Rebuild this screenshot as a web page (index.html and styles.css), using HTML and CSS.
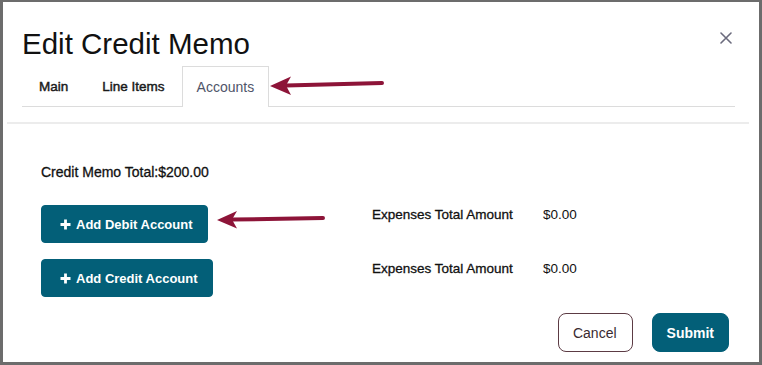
FILE: index.html
```html
<!DOCTYPE html>
<html lang="en">
<head>
  <meta charset="UTF-8">
  <meta name="viewport" content="width=device-width, initial-scale=1.0">
  <title>Edit Credit Memo</title>
  <link rel="stylesheet" href="styles.css">
</head>
<body>
  <div class="frame">
    <div class="header">
      <div class="title-row">
        <h1>Edit Credit Memo</h1>
        <button class="close" aria-label="Close">
          <svg width="12" height="12" viewBox="0 0 12 12"><path d="M1 1L11 11M11 1L1 11" stroke="#6b6b7d" stroke-width="1.6" stroke-linecap="round"/></svg>
        </button>
      </div>
      <ul class="tabs">
        <li class="tab">Main</li>
        <li class="tab">Line Items</li>
        <li class="tab active">Accounts</li>
      </ul>
    </div>

    <div class="separator"></div>

    <div class="content">
      <p class="total">Credit Memo Total:$200.00</p>

      <div class="accounts">
        <button class="btn btn-primary add">
          <svg width="11" height="11" viewBox="0 0 11 11"><path d="M5.5 0.5V10.5M0.5 5.5H10.5" stroke="#fff" stroke-width="2.8"/></svg>
          Add Debit Account
        </button>
        <div class="amount">
          <span class="label">Expenses Total Amount</span>
          <span class="value">$0.00</span>
        </div>

        <button class="btn btn-primary add">
          <svg width="11" height="11" viewBox="0 0 11 11"><path d="M5.5 0.5V10.5M0.5 5.5H10.5" stroke="#fff" stroke-width="2.8"/></svg>
          Add Credit Account
        </button>
        <div class="amount">
          <span class="label">Expenses Total Amount</span>
          <span class="value">$0.00</span>
        </div>
      </div>

      <div class="footer">
        <button class="btn btn-outline">Cancel</button>
        <button class="btn btn-primary">Submit</button>
      </div>
    </div>

    <!-- annotation arrows drawn over the dialog -->
    <svg class="annotations" width="762" height="365" viewBox="0 0 762 365">
      <path d="M286 85.5L382 83" stroke="#8d1438" stroke-width="4" stroke-linecap="round" fill="none"/>
      <path d="M270 86L291 76.5L286 85.6L291 95Z" fill="#8d1438"/>
      <path d="M232 219.6L323 218" stroke="#8d1438" stroke-width="4" stroke-linecap="round" fill="none"/>
      <path d="M217 220L237 211L232 219.6L237 228.5Z" fill="#8d1438"/>
    </svg>
  </div>
</body>
</html>
```

FILE: styles.css
```css
body {
  margin: 0;
  padding: 0;
  background-color: #fff;
  font-family: "Liberation Sans", Arial, sans-serif;
  color: #1a1a1a;
}
.frame {
  position: relative;
  width: 762px;
  height: 365px;
  box-sizing: border-box;
  border: 3px solid #6c6c6c;
  border-top-width: 2px;
  padding: 0 10px 0 4px;
}
.header {
  padding: 25px 14px 0 15px;
}
.title-row {
  display: flex;
  justify-content: space-between;
  align-items: flex-start;
}
h1 {
  margin: 0;
  font-size: 29.5px;
  line-height: 34px;
  font-weight: 400;
  color: #111;
}
.close {
  background: none;
  border: none;
  padding: 0;
  margin: 5px 3px 0 0;
  width: 12px;
  height: 12px;
  cursor: pointer;
}
.close svg {
  display: block;
}
.tabs {
  display: flex;
  gap: 1px;
  list-style: none;
  margin: 5px 0 0;
  padding: 0;
  border-bottom: 1px solid #dcdcdc;
}
.tab {
  height: 39px;
  line-height: 40px;
  padding: 0 15px 0 16px;
  font-size: 13.5px;
  font-weight: 400;
  -webkit-text-stroke: 0.45px #1a1a1a;
  color: #1a1a1a;
  border: 1px solid transparent;
  border-bottom: none;
  margin-bottom: -1px;
}
.tab.active {
  margin-left: 0;
  padding: 0 14px;
  font-size: 14px;
  -webkit-text-stroke: 0;
  color: #4f5569;
  background-color: #fff;
  border-color: #dcdcdc;
  height: 40px;
}
.separator {
  height: 2px;
  margin-top: 15px;
  background-color: #ececec;
}
.content {
  padding: 0 20px 0 34px;
}
.total {
  margin: 39px 0 0;
  font-size: 14px;
  line-height: 18px;
  color: #111;
  -webkit-text-stroke: 0.3px #111;
}
.accounts {
  display: grid;
  grid-template-columns: 331px auto;
  row-gap: 16px;
  margin-top: 24px;
  align-items: start;
}
.btn {
  font-family: "Liberation Sans", Arial, sans-serif;
  font-size: 14px;
  height: 39px;
  border-radius: 8px;
  cursor: pointer;
}
.btn-primary {
  background-color: #035f78;
  border: 1px solid #035f78;
  color: #fff;
  font-weight: 700;
  padding: 0 14px;
}
.btn-outline {
  background-color: #fff;
  border: 1px solid #5c3b44;
  color: #3a2a30;
  padding: 0 15px;
}
.add {
  justify-self: start;
  display: flex;
  align-items: center;
  gap: 5px;
  height: 38px;
  font-size: 13px;
  border-radius: 4px;
  padding: 0 14px 0 18px;
}
.add svg {
  display: block;
}
.amount {
  display: flex;
  font-size: 13.5px;
  line-height: 18px;
  padding-top: 1px;
  color: #111;
}
.label {
  width: 171px;
  -webkit-text-stroke: 0.3px #111;
}
.footer {
  display: flex;
  justify-content: flex-end;
  gap: 19px;
  margin-top: 16px;
}
.footer .btn-outline {
  padding: 0 15px 0 14px;
}
.annotations {
  position: absolute;
  top: -2px;
  left: -3px;
  pointer-events: none;
}
```
